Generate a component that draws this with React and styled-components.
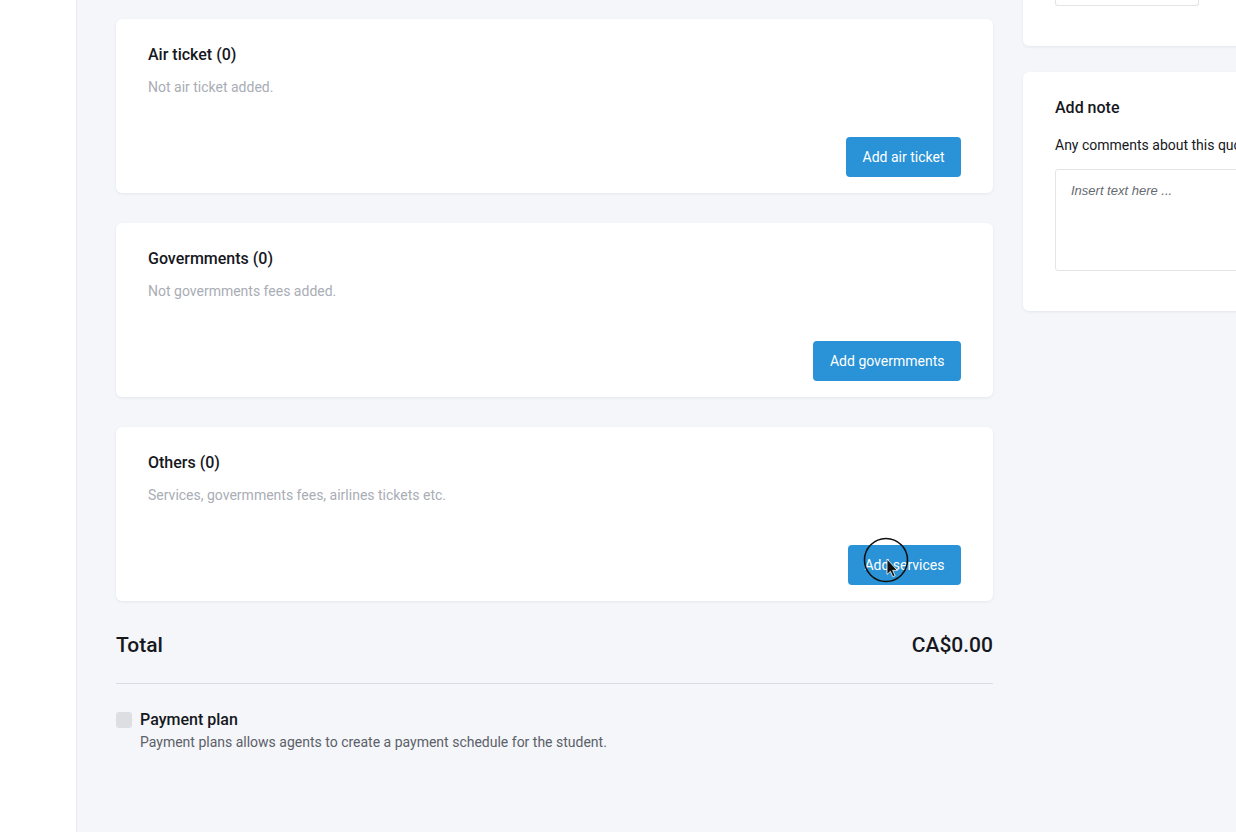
import React from 'react'
import styled, { createGlobalStyle } from 'styled-components'

const GlobalStyle = createGlobalStyle`
  html, body {
    margin: 0;
    padding: 0;
    height: 100%;
    overflow: hidden;
    background: #f4f6fa;
  }
  * {
    box-sizing: border-box;
  }
`

const Page = styled.div`
  display: flex;
  width: 1236px;
  height: 832px;
  overflow: hidden;
  font-family: Roboto, 'Liberation Sans', sans-serif;
  color: #16181d;
`

const Sidebar = styled.div`
  flex: 0 0 77px;
  background: #fff;
  border-right: 1px solid #e9ebf0;
`

const Content = styled.div`
  flex: 1;
  display: flex;
  gap: 30px;
  padding: 0 0 0 39px;
  min-width: 0;
`

const MainColumn = styled.div`
  flex: 0 0 877px;
  display: flex;
  flex-direction: column;
  padding-top: 19px;
`

const SideColumn = styled.div`
  flex: 0 0 300px;
  display: flex;
  flex-direction: column;
  gap: 26px;
`

const Card = styled.div`
  background: #fff;
  border-radius: 6px;
  box-shadow: 0 1px 3px rgba(40, 50, 80, 0.08);
`

const ServiceCard = styled(Card)`
  height: 174px;
  padding: 26px 32px 16px;
  display: flex;
  flex-direction: column;
  margin-bottom: 30px;

  &:nth-of-type(3) {
    margin-bottom: 0;
  }
`

const CardTitle = styled.div`
  font-size: 16px;
  font-weight: 500;
  line-height: 20px;
`

const EmptyText = styled.div`
  margin-top: 12px;
  font-size: 14px;
  line-height: 20px;
  color: #a9adb5;
`

const CardFooter = styled.div`
  margin-top: auto;
  display: flex;
  justify-content: flex-end;
`

const ButtonWrap = styled.div`
  position: relative;
`

const Button = styled.button`
  display: block;
  height: 40px;
  padding: 0 16.5px;
  border: 0;
  border-radius: 4px;
  background: #2a92d6;
  color: #fff;
  font-family: inherit;
  font-size: 14px;
  font-weight: 400;
`

const CursorOverlay = styled.svg`
  position: absolute;
  left: 15px;
  top: -8px;
  width: 46px;
  height: 46px;
  pointer-events: none;
`

const TotalRow = styled.div`
  display: flex;
  justify-content: space-between;
  align-items: center;
  height: 83px;
  padding-top: 5px;
  border-bottom: 1px solid #d9dce2;
  font-size: 21px;
  font-weight: 500;
`

const PaymentPlan = styled.div`
  display: flex;
  gap: 8px;
  padding-top: 27px;
`

const Checkbox = styled.div`
  flex: 0 0 16px;
  height: 16px;
  margin-top: 1px;
  border-radius: 3px;
  background: #dcdee2;
`

const PlanTitle = styled.div`
  font-size: 16px;
  font-weight: 500;
  line-height: 18px;
`

const PlanText = styled.div`
  margin-top: 4px;
  font-size: 14px;
  line-height: 18px;
  color: #5c6068;
`

const ClippedCard = styled(Card)`
  height: 46px;
  padding-left: 32px;
  border-radius: 0 0 0 6px;
`

const ClippedInput = styled.div`
  width: 144px;
  height: 6px;
  background: #fff;
  border: 1px solid #e2e4e8;
  border-top: 0;
  border-radius: 0 0 3px 3px;
`

const NoteCard = styled(Card)`
  height: 239px;
  padding: 26px 0 40px 32px;
  border-radius: 6px 0 0 6px;
  overflow: hidden;
`

const NoteLabel = styled.div`
  margin-top: 17px;
  font-size: 14px;
  line-height: 20px;
  white-space: nowrap;
`

const NoteInput = styled.textarea`
  display: block;
  width: 320px;
  height: 102px;
  margin-top: 14px;
  padding: 13px 15px;
  border: 1px solid #e2e4e8;
  border-radius: 3px;
  resize: none;
  outline: 0;
  font-family: 'Liberation Sans', Arial, sans-serif;
  font-size: 13px;
  line-height: 16px;

  &::placeholder {
    font-style: italic;
    color: #666a70;
    opacity: 1;
  }
`

const services = [
  { title: 'Air ticket (0)', empty: 'Not air ticket added.', action: 'Add air ticket' },
  { title: 'Govermments (0)', empty: 'Not govermments fees added.', action: 'Add govermments' },
  { title: 'Others (0)', empty: 'Services, govermments fees, airlines tickets etc.', action: 'Add services', cursor: true },
]

const App = () => {
  return (
    <Page>
      <GlobalStyle />
      <Sidebar />
      <Content>
        <MainColumn>
          {services.map((item) => (
            <ServiceCard key={item.title}>
              <CardTitle>{item.title}</CardTitle>
              <EmptyText>{item.empty}</EmptyText>
              <CardFooter>
                <ButtonWrap>
                  <Button>{item.action}</Button>
                  {item.cursor && (
                    <CursorOverlay viewBox="0 0 46 46">
                      <circle cx="23" cy="23" r="21.5" fill="none" stroke="#111" strokeWidth="1.6" />
                      <path d="M24 22v15.5l3.4-3.2 2.4 5.4 2.3-1-2.4-5.3h4.6z" fill="#111" stroke="#fff" strokeWidth="0.8" />
                    </CursorOverlay>
                  )}
                </ButtonWrap>
              </CardFooter>
            </ServiceCard>
          ))}
          <TotalRow>
            <span>Total</span>
            <span>CA$0.00</span>
          </TotalRow>
          <PaymentPlan>
            <Checkbox />
            <div>
              <PlanTitle>Payment plan</PlanTitle>
              <PlanText>Payment plans allows agents to create a payment schedule for the student.</PlanText>
            </div>
          </PaymentPlan>
        </MainColumn>
        <SideColumn>
          <ClippedCard>
            <ClippedInput />
          </ClippedCard>
          <NoteCard>
            <CardTitle>Add note</CardTitle>
            <NoteLabel>Any comments about this quote?</NoteLabel>
            <NoteInput placeholder="Insert text here ..." />
          </NoteCard>
        </SideColumn>
      </Content>
    </Page>
  )
}

export default App
